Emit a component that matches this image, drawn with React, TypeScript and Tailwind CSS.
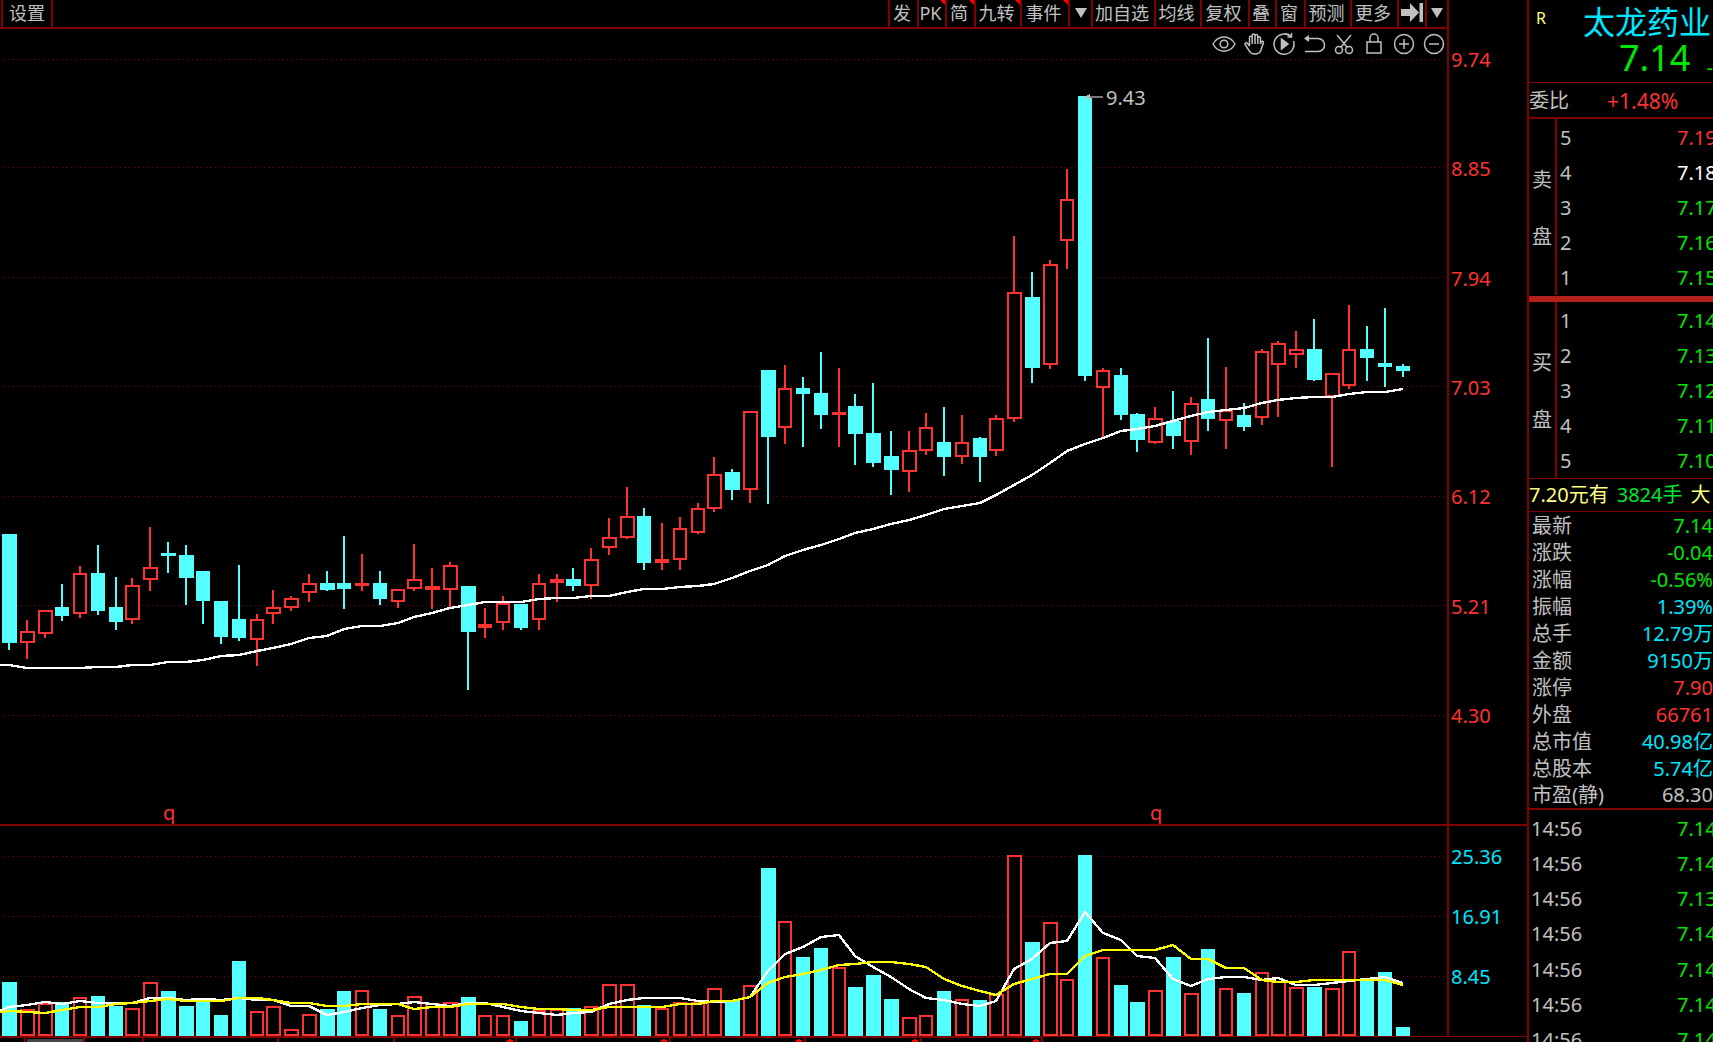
import type { ReactNode } from "react";

type Candle = [x: number, high: number, top: number, bottom: number, low: number, up: 0 | 1, vol: number];

// x centre, high, body top, body bottom, low, rising, volume top
const candles: Candle[] = [
  [9, 534, 534, 643, 650, 0, 982],
  [27, 620, 631, 643, 659, 1, 1009],
  [45, 610, 610, 634, 638, 1, 1003],
  [62, 584, 607, 616, 621, 0, 1002],
  [80, 566, 573, 614, 618, 1, 997],
  [98, 545, 573, 611, 615, 0, 996],
  [116, 577, 607, 622, 630, 0, 1006],
  [132, 578, 585, 620, 624, 1, 1008],
  [150, 527, 567, 580, 591, 1, 982],
  [168, 542, 553, 556, 573, 0, 991],
  [186, 545, 555, 578, 605, 0, 1006],
  [203, 571, 571, 601, 624, 0, 1001],
  [221, 601, 601, 637, 644, 0, 1015],
  [239, 565, 619, 638, 641, 0, 961],
  [257, 614, 619, 640, 666, 1, 1011],
  [273, 590, 607, 614, 624, 1, 1006],
  [291, 596, 598, 608, 611, 1, 1029],
  [309, 574, 583, 593, 602, 1, 1014],
  [327, 571, 583, 590, 591, 0, 1009],
  [344, 536, 583, 589, 609, 0, 991],
  [362, 554, 583, 586, 591, 1, 990],
  [380, 571, 583, 599, 605, 0, 1009],
  [398, 589, 589, 602, 608, 1, 1015],
  [414, 544, 579, 589, 591, 1, 996],
  [432, 568, 586, 590, 609, 1, 1003],
  [450, 562, 565, 590, 608, 1, 1002],
  [468, 586, 586, 632, 690, 0, 997],
  [485, 608, 624, 628, 638, 1, 1015],
  [503, 596, 603, 623, 630, 1, 1015],
  [521, 604, 604, 628, 630, 0, 1021],
  [539, 574, 583, 620, 630, 1, 1010],
  [557, 574, 579, 583, 602, 1, 1009],
  [573, 568, 579, 586, 591, 0, 1008],
  [591, 548, 559, 586, 599, 1, 1006],
  [609, 518, 537, 548, 555, 1, 984],
  [627, 487, 516, 538, 539, 1, 984],
  [644, 508, 516, 563, 570, 0, 1005],
  [662, 523, 559, 563, 570, 1, 1008],
  [680, 517, 528, 560, 570, 1, 1002],
  [698, 503, 508, 533, 534, 1, 1002],
  [714, 457, 474, 509, 512, 1, 988],
  [732, 469, 472, 490, 500, 0, 1001],
  [750, 411, 411, 490, 503, 1, 985],
  [768, 370, 370, 437, 504, 0, 868],
  [785, 365, 388, 428, 444, 1, 921],
  [803, 377, 388, 394, 447, 0, 957],
  [821, 352, 393, 415, 429, 0, 948],
  [839, 368, 412, 415, 447, 1, 967],
  [855, 394, 406, 434, 465, 0, 987],
  [873, 383, 433, 463, 467, 0, 975],
  [891, 431, 456, 470, 495, 0, 999],
  [909, 431, 450, 472, 492, 1, 1017],
  [926, 413, 427, 451, 455, 1, 1015],
  [944, 407, 442, 457, 476, 0, 991],
  [962, 415, 442, 457, 464, 1, 999],
  [980, 437, 438, 457, 482, 0, 1000],
  [996, 415, 418, 451, 456, 1, 994],
  [1014, 236, 292, 419, 422, 1, 855],
  [1032, 272, 297, 368, 383, 0, 942],
  [1050, 260, 264, 365, 369, 1, 922],
  [1067, 169, 199, 241, 269, 1, 979],
  [1085, 96, 96, 376, 381, 0, 855],
  [1103, 368, 370, 388, 438, 1, 957],
  [1121, 368, 375, 415, 420, 0, 985],
  [1137, 413, 414, 440, 452, 0, 1002],
  [1155, 407, 418, 443, 444, 1, 990],
  [1173, 391, 421, 436, 449, 0, 957],
  [1191, 397, 403, 442, 455, 1, 993],
  [1208, 338, 399, 419, 431, 0, 949],
  [1226, 367, 410, 421, 449, 1, 988],
  [1244, 403, 415, 427, 431, 0, 993],
  [1262, 349, 351, 418, 425, 1, 972],
  [1278, 341, 343, 365, 417, 1, 981],
  [1296, 331, 349, 355, 368, 1, 987],
  [1314, 319, 349, 380, 381, 0, 987],
  [1332, 373, 373, 397, 467, 1, 988],
  [1349, 305, 349, 386, 389, 1, 951],
  [1367, 326, 349, 358, 381, 0, 978],
  [1385, 308, 363, 367, 387, 0, 972],
  [1403, 364, 366, 371, 377, 0, 1027],
];

// one value per candle
const priceMa = [
  665, 668, 668, 668, 668, 667, 667, 665, 665, 662, 662, 660, 656, 655, 651, 648, 644, 638, 636, 629,
  626, 626, 623, 617, 613, 608, 605, 602, 602, 602, 599, 598, 598, 596, 596, 592, 589, 589, 587, 586,
  584, 578, 571, 565, 556, 550, 545, 539, 533, 529, 524, 520, 515, 509, 506, 503, 495, 485, 475, 463,
  451, 444, 438, 431, 429, 426, 421, 416, 412, 410, 408, 403, 400, 398, 397, 397, 394, 392, 392, 389,
];
const volMa5 = [
  1007, 1005, 1002, 1004, 1001, 1003, 1003, 1003, 998, 998, 1000, 999, 1000, 998, 1000, 1000, 1006, 1006, 1015, 1012,
  1008, 1005, 1004, 1002, 1004, 1006, 1003, 1003, 1007, 1011, 1013, 1015, 1013, 1012, 1004, 1000, 998, 998, 998, 1001,
  1002, 1001, 997, 971, 954, 947, 937, 935, 956, 967, 977, 989, 998, 1000, 1004, 1006, 1001, 969, 959, 943,
  941, 912, 933, 940, 956, 958, 979, 986, 979, 977, 977, 980, 978, 985, 985, 983, 981, 979, 977, 983,
];
const volMa10 = [
  1011, 1012, 1013, 1010, 1007, 1007, 1004, 1003, 1001, 999, 1001, 1001, 1001, 998, 998, 1000, 1003, 1003, 1006, 1006,
  1004, 1004, 1004, 1009, 1007, 1007, 1004, 1004, 1004, 1007, 1009, 1009, 1010, 1010, 1007, 1007, 1007, 1007, 1004, 1004,
  1001, 1001, 997, 983, 977, 974, 970, 965, 964, 962, 962, 964, 967, 979, 986, 991, 995, 984, 979, 974,
  974, 956, 950, 950, 950, 950, 945, 959, 959, 968, 968, 980, 982, 982, 980, 980, 980, 980, 980, 985,
];

// bars are 15px wide until the step drops to 17, then 14px until it drops to 16
const widths: number[] = [];
candles.forEach((c, i) => {
  const step = i ? c[0] - candles[i - 1][0] : 16;
  widths.push(step === 16 ? 15 : step === 17 ? 14 : widths[i - 1]);
});

const RED = "#ff3232";
const CYAN = "#54ffff";

const linePath = (start: number, ys: number[]) =>
  `M0 ${start}` + ys.map((y, i) => `L${candles[i][0]} ${y}`).join("");

function Bar({ x, y, w, h, up }: { x: number; y: number; w: number; h: number; up: boolean }) {
  return (
    <>
      <rect x={x} y={y} width={w} height={h} fill={up ? RED : CYAN} />
      {up && h > 4 && <rect x={x + 2} y={y + 2} width={w - 4} height={h - 4} fill="#000" />}
    </>
  );
}

function GridLines({ rows }: { rows: number[] }) {
  return (
    <>
      {rows.map((y) => (
        <path key={y} d={`M3 ${y}.5H1445`} stroke="#800000" strokeDasharray="1 4 1 3" />
      ))}
    </>
  );
}

function PriceChart() {
  return (
    <svg viewBox="0 29 1447 795" preserveAspectRatio="none" className="block h-full w-full" shapeRendering="crispEdges">
      <GridLines rows={[59, 167, 277, 386, 496, 605, 715]} />
      {candles.map(([x, high, top, bottom, low, up], i) => (
        <g key={x}>
          <rect x={x - 1} y={high} width="2" height={low - high} fill={up ? RED : CYAN} />
          <Bar x={x - 7} y={top} w={widths[i]} h={bottom - top} up={up === 1} />
        </g>
      ))}
      <path d={linePath(665, priceMa)} fill="none" stroke="#fff" strokeWidth="2.4" />
      <path d="M1090 97H1103" stroke="#777" strokeWidth="2" />
      <path d="M1084 97L1090 94V100Z" fill="#c0c0c0" />
      <text x="1106" y="105" fill="#c0c0c0" fontSize="20">9.43</text>
      <text x="163" y="820" fill={RED} fontSize="20">q</text>
      <text x="1150" y="820" fill={RED} fontSize="20">q</text>
    </svg>
  );
}

function VolumeChart() {
  return (
    <svg viewBox="0 826 1447 210" preserveAspectRatio="none" className="block h-full w-full" shapeRendering="crispEdges">
      <GridLines rows={[856, 916, 976]} />
      {candles.map(([x, , , , , up, vol], i) => (
        <Bar key={x} x={x - 7} y={vol} w={widths[i]} h={1036 - vol} up={up === 1} />
      ))}
      <path d={linePath(1011, volMa5)} fill="none" stroke="#fff" strokeWidth="2.4" />
      <path d={linePath(1012, volMa10)} fill="none" stroke="#ff0" strokeWidth="2.4" />
    </svg>
  );
}

function DateStrip() {
  return (
    <svg viewBox="0 1036 1527 6" preserveAspectRatio="none" className="block h-1.5 w-full" shapeRendering="crispEdges">
      <rect x="27" y="1039" width="56" height="3" fill="#444" />
      <path d="M0 1037H1043" stroke="#800000" strokeWidth="2" />
      <path d="M1043 1036.5H1527" stroke="#800000" />
      {[25, 84, 143, 278, 394, 516, 670, 805, 921, 1042].map((x) => (
        <path key={x} d={`M${x} 1037V1042`} stroke="#800000" strokeWidth="2" />
      ))}
      {[510, 664, 799, 915, 1036].map((x) => (
        <path key={x} d={`M${x - 3} 1042V1040H${x - 1}V1039H${x + 1}V1040H${x + 3}V1042Z`} fill="#f00" />
      ))}
    </svg>
  );
}

const downArrow = (
  <svg viewBox="0 0 12 10" className="h-2.5 w-3" fill="#c0c0c0">
    <path d="M0 0H12L6 10Z" />
  </svg>
);

const skipArrow = (
  <svg viewBox="0 0 22 19" className="h-[19px] w-[22px]" fill="#c0c0c0">
    <path d="M0 6H9V0L18 9.500L9 19V13H0Z" />
    <path d="M18.500 0H22V19H18.500Z" />
  </svg>
);

const tools: { label: string; width: string; mark?: boolean; content?: ReactNode }[] = [
  { label: "发", width: "w-[29px]" },
  { label: "PK", width: "w-7", mark: true },
  { label: "简", width: "w-[29px]", mark: true },
  { label: "九转", width: "w-[46px]", mark: true },
  { label: "事件", width: "w-12", mark: true },
  { label: "事件菜单", width: "w-[23px]", content: downArrow },
  { label: "加自选", width: "w-[63px]" },
  { label: "均线", width: "w-[46px]" },
  { label: "复权", width: "w-12" },
  { label: "叠", width: "w-[27px]" },
  { label: "窗", width: "w-[29px]" },
  { label: "预测", width: "w-[46px]" },
  { label: "更多", width: "w-[47px]" },
  { label: "收起", width: "w-7", content: skipArrow },
  { label: "菜单", width: "w-[22px]", content: downArrow },
];

function Toolbar() {
  return (
    <header className="mr-[78px] flex h-[29px] shrink-0 justify-between border-r-2 border-b-2 border-[#800000] pl-px text-lg leading-6">
      <button className="w-[52px] border-x-2 border-[#800000] pb-0.5">设置</button>
      <div className="flex">
        {tools.map((t) => (
          <button
            key={t.label}
            aria-label={t.label}
            className={`relative flex items-center justify-center border-l-2 border-[#800000] pb-0.5 ${t.content ? "" : "pr-[3px]"} ${t.width}`}
          >
            {t.content ?? t.label}
            {t.mark && (
              <svg viewBox="0 0 5 5" className="absolute top-0 right-0 size-[5px]">
                <path d="M0 0H5V5Z" fill="#f00" />
              </svg>
            )}
          </button>
        ))}
      </div>
    </header>
  );
}

const drawIcons: { label: string; shape: ReactNode }[] = [
  {
    label: "显示",
    shape: (
      <>
        <path d="M1 12C6 2.500 18 2.500 23 12C18 21.500 6 21.500 1 12Z" />
        <circle cx="12" cy="12" r="3.800" />
      </>
    ),
  },
  {
    label: "拖动",
    shape: (
      <path d="M7.500 14V5.500a1.300 1.300 0 0 1 2.700 0V12M10.200 5.500V3.500a1.400 1.400 0 0 1 2.800 0V12M13 4a1.400 1.400 0 0 1 2.800 0V12M15.800 6a1.300 1.300 0 0 1 2.700 0V12L19.500 9.500a1.200 1.200 0 0 1 2 1L19 18Q17.500 22 13 22Q9 22 7.300 19L3 12.500a1.400 1.400 0 0 1 2.200-1.500L7.500 14" />
    ),
  },
  {
    label: "回放",
    shape: (
      <>
        <path d="M17 3.500A10 10 0 1 0 21.500 9M12 2Q16 1 19 4.500M19.500 1V5H15.500" />
        <path d="M9.500 7L16 12L9.500 17Z" fill="#c0c0c0" />
      </>
    ),
  },
  {
    label: "撤销",
    shape: (
      <>
        <path d="M4 6.500H16A6.500 6.500 0 0 1 16 19.500H3" />
        <path d="M2 6.500L7 3V10Z" fill="#c0c0c0" stroke="none" />
      </>
    ),
  },
  {
    label: "剪切",
    shape: (
      <>
        <path d="M5 3L15 15M19 3L9 15" />
        <circle cx="7" cy="18" r="3.500" />
        <circle cx="17" cy="18" r="3.500" />
      </>
    ),
  },
  {
    label: "锁定",
    shape: <path d="M5 10H19V21H5ZM8 10V6a4 4 0 0 1 8 0V10" />,
  },
  {
    label: "放大",
    shape: (
      <>
        <circle cx="12" cy="12" r="9.500" />
        <path d="M7 12H17M12 7V17" />
      </>
    ),
  },
  {
    label: "缩小",
    shape: (
      <>
        <circle cx="12" cy="12" r="9.500" />
        <path d="M7 12H17" />
      </>
    ),
  },
];

function DrawTools() {
  return (
    <div className="absolute top-[3px] right-px flex gap-1.5">
      {drawIcons.map((icon) => (
        <button key={icon.label} aria-label={icon.label}>
          <svg viewBox="0 0 24 24" className="block size-6" fill="none" stroke="#c0c0c0" strokeWidth="1.500">
            {icon.shape}
          </svg>
        </button>
      ))}
    </div>
  );
}

const asks = [
  ["5", "7.19", "text-[#ff3232]"],
  ["4", "7.18", "text-white"],
  ["3", "7.17", "text-[#00e600]"],
  ["2", "7.16", "text-[#00e600]"],
  ["1", "7.15", "text-[#00e600]"],
];
const bids = [
  ["1", "7.14", "text-[#00e600]"],
  ["2", "7.13", "text-[#00e600]"],
  ["3", "7.12", "text-[#00e600]"],
  ["4", "7.11", "text-[#00e600]"],
  ["5", "7.10", "text-[#00e600]"],
];
const stats = [
  ["最新", "7.14", "text-[#00e600]"],
  ["涨跌", "-0.04", "text-[#00e600]"],
  ["涨幅", "-0.56%", "text-[#00e600]"],
  ["振幅", "1.39%", "text-[#00e6ff]"],
  ["总手", "12.79万", "text-[#00e6ff]"],
  ["金额", "9150万", "text-[#00e6ff]"],
  ["涨停", "7.90", "text-[#ff3232]"],
  ["外盘", "66761", "text-[#ff3232]"],
  ["总市值", "40.98亿", "text-[#00e6ff]"],
  ["总股本", "5.74亿", "text-[#00e6ff]"],
  ["市盈(静)", "68.30", "text-[#c0c0c0]"],
];
const ticks = ["7.14", "7.14", "7.13", "7.14", "7.14", "7.14", "7.14"];

function Book({ side, rows }: { side: string; rows: string[][] }) {
  return (
    <div className="flex">
      <div className="flex w-7 shrink-0 flex-col items-center justify-center gap-[37px] border-r-2 border-[#800000] pt-0.5 leading-5">
        {side.split("").map((c) => (
          <span key={c}>{c}</span>
        ))}
      </div>
      <table className="mt-px w-[162px] shrink-0">
        <tbody>
          {rows.map(([n, price, color]) => (
            <tr key={n} className="h-[35px]">
              <td className="w-[120px] pl-[3px]">{n}</td>
              <td className={color}>{price}</td>
            </tr>
          ))}
        </tbody>
      </table>
    </div>
  );
}

function QuotePanel() {
  return (
    <aside className="w-[186px] shrink-0 overflow-hidden border-l-2 border-[#800000] whitespace-nowrap">
      <div className="h-[83px] border-b border-[#800000] pt-1">
        <div className="flex">
          <span className="w-[54px] pl-[7px] text-base leading-7 text-[#ffff80]">R</span>
          <h1 className="text-[32px] leading-9 text-[#00e6ff]">太龙药业</h1>
        </div>
        <div className="flex items-end gap-4 pl-[90px] text-[#00e600]">
          <span className="text-4xl leading-9">7.14</span>
          <span className="leading-4">-0.04</span>
        </div>
      </div>
      <div className="flex h-9 items-center gap-[38px] border-b-2 border-[#800000] pt-0.5">
        <span>委比</span>
        <span className="text-[21px] text-[#ff3232]">+1.48%</span>
      </div>
      <Book side="卖盘" rows={asks} />
      <div className="mt-px h-1.5 bg-[#b2201a]" />
      <Book side="买盘" rows={bids} />
      <div className="flex h-[34px] items-center gap-2 border-y border-[#800000] text-[#ffff80]">
        <span>7.20元有</span>
        <span className="text-[#00e632]">3824手</span>
        <span>大</span>
      </div>
      <table className="w-full border-b-2 border-[#800000]">
        <tbody>
          {stats.map(([label, value, color]) => (
            <tr key={label} className="h-[27px]">
              <td className="pl-[3px]">{label}</td>
              <td className={`text-right ${color}`}>{value}</td>
            </tr>
          ))}
        </tbody>
      </table>
      <table className="mt-px h-[247px] w-[190px]">
        <tbody>
          {ticks.map((price, i) => (
            <tr key={i}>
              <td className="w-[148px] pl-0.5">14:56</td>
              <td className="text-[#00e600]">{price}</td>
            </tr>
          ))}
        </tbody>
      </table>
    </aside>
  );
}

export default function App() {
  return (
    <div className="flex h-screen overflow-hidden bg-black font-['Noto_Sans','Noto_Sans_CJK_SC',sans-serif] text-xl leading-6 text-[#c0c0c0]">
      <main className="flex min-w-0 flex-1 flex-col">
        <Toolbar />
        <section className="flex min-h-0 flex-1 border-b-2 border-[#800000]">
          <div className="relative min-w-0 flex-1">
            <PriceChart />
            <DrawTools />
          </div>
          <div className="flex w-20 flex-col justify-between border-l-2 border-[#800000] pt-[19px] pb-24 pl-0.5 text-[#ff3232]">
            {["9.74", "8.85", "7.94", "7.03", "6.12", "5.21", "4.30"].map((v) => (
              <span key={v}>{v}</span>
            ))}
          </div>
        </section>
        <section className="flex h-[210px] shrink-0">
          <div className="min-w-0 flex-1">
            <VolumeChart />
          </div>
          <div className="flex w-20 flex-col gap-9 border-l-2 border-[#800000] pt-[19px] pl-0.5 text-[#00e6ff]">
            {["25.36", "16.91", "8.45"].map((v) => (
              <span key={v}>{v}</span>
            ))}
          </div>
        </section>
        <DateStrip />
      </main>
      <QuotePanel />
    </div>
  );
}
